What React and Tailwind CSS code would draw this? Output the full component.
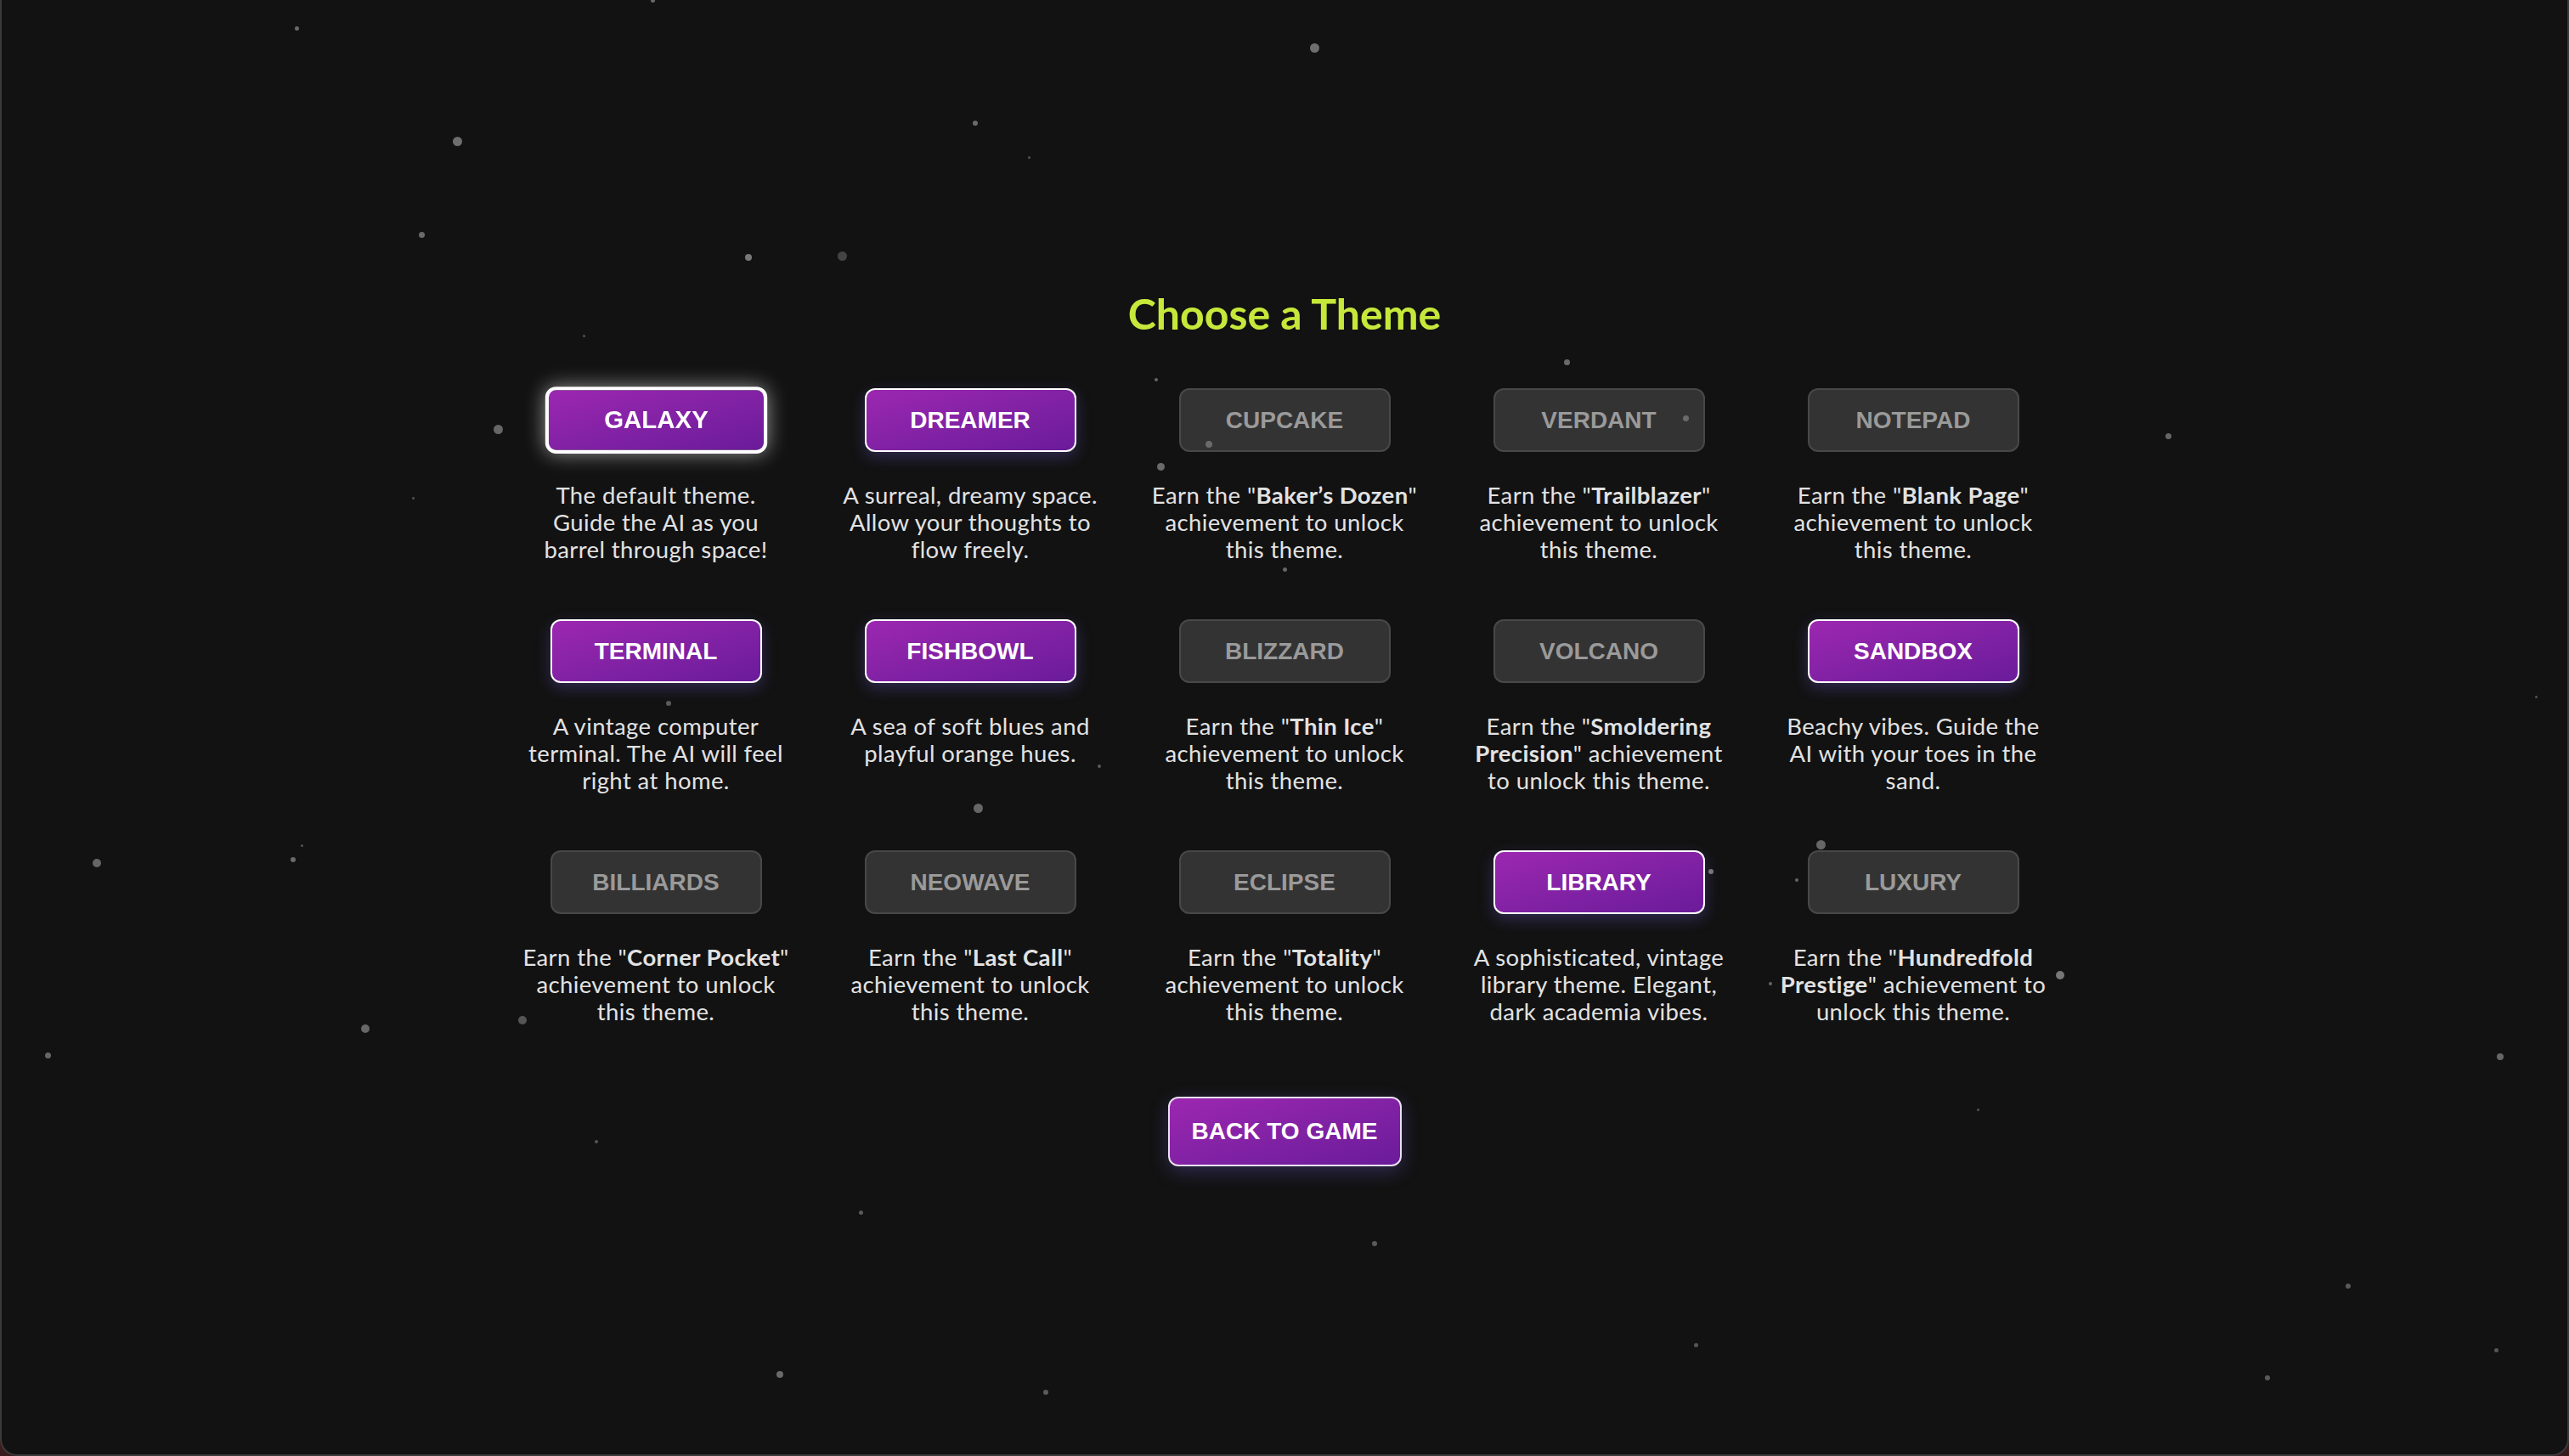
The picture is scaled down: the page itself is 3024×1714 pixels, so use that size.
const themes = [
  { name: 'GALAXY', unlocked: true, selected: true, lines: ['The default theme.', 'Guide the AI as you', 'barrel through space!'] },
  { name: 'DREAMER', unlocked: true, lines: ['A surreal, dreamy space.', 'Allow your thoughts to', 'flow freely.'] },
  { name: 'CUPCAKE', achievement: 'Baker’s Dozen' },
  { name: 'VERDANT', achievement: 'Trailblazer' },
  { name: 'NOTEPAD', achievement: 'Blank Page' },
  { name: 'TERMINAL', unlocked: true, lines: ['A vintage computer', 'terminal. The AI will feel', 'right at home.'] },
  { name: 'FISHBOWL', unlocked: true, lines: ['A sea of soft blues and', 'playful orange hues.'] },
  { name: 'BLIZZARD', achievement: 'Thin Ice' },
  { name: 'VOLCANO', custom: 'volcano' },
  { name: 'SANDBOX', unlocked: true, lines: ['Beachy vibes. Guide the', 'AI with your toes in the', 'sand.'] },
  { name: 'BILLIARDS', achievement: 'Corner Pocket' },
  { name: 'NEOWAVE', achievement: 'Last Call' },
  { name: 'ECLIPSE', achievement: 'Totality' },
  { name: 'LIBRARY', unlocked: true, lines: ['A sophisticated, vintage', 'library theme. Elegant,', 'dark academia vibes.'] },
  { name: 'LUXURY', custom: 'luxury' },
];

// [x, y, size, color]
const stars = [
  [347, 33, 5, '#6a6a6a'], [766, 0, 5, '#6a6a6a'], [1545, 56, 11, '#6e6e6e'], [536, 166, 11, '#6e6e6e'],
  [1146, 145, 6, '#6a6a6a'], [1209, 185, 3, '#555'], [494, 276, 7, '#6a6a6a'], [879, 303, 8, '#777'],
  [989, 301, 11, '#444'], [685, 395, 3, '#555'], [1842, 426, 7, '#6a6a6a'], [1359, 447, 4, '#666'],
  [584, 505, 11, '#666'], [484, 586, 3, '#555'], [1421, 523, 8, '#6a6a6a'], [1364, 549, 9, '#6a6a6a'],
  [2550, 513, 7, '#666'], [1982, 492, 7, '#6a6a6a'], [1510, 670, 5, '#666'], [785, 828, 6, '#5a5a5a'],
  [1292, 902, 4, '#5a5a5a'], [1149, 951, 11, '#666'], [2983, 820, 3, '#555'], [353, 995, 3, '#555'],
  [343, 1012, 6, '#6a6a6a'], [112, 1016, 10, '#666'], [2141, 994, 11, '#666'], [2113, 1036, 4, '#666'],
  [2012, 1026, 6, '#777'], [2423, 1148, 10, '#777'], [2082, 1158, 4, '#666'], [613, 1201, 10, '#555'],
  [428, 1211, 10, '#666'], [54, 1242, 7, '#666'], [2941, 1244, 8, '#666'], [700, 1344, 4, '#555'],
  [2326, 1306, 3, '#555'], [1011, 1427, 5, '#5a5a5a'], [1616, 1464, 6, '#5a5a5a'], [2762, 1514, 6, '#5a5a5a'],
  [1994, 1583, 5, '#555'], [2936, 1589, 5, '#555'], [916, 1618, 8, '#6a6a6a'], [1229, 1639, 6, '#5a5a5a'],
  [2667, 1622, 6, '#5a5a5a'],
];

function Desc({ theme }) {
  if (theme.lines) {
    return theme.lines.map((l) => <span key={l} className="block">{l}</span>);
  }
  if (theme.custom === 'volcano') {
    return (
      <>
        <span className="block">Earn the "<b>Smoldering</b></span>
        <span className="block"><b>Precision</b>" achievement</span>
        <span className="block">to unlock this theme.</span>
      </>
    );
  }
  if (theme.custom === 'luxury') {
    return (
      <>
        <span className="block">Earn the "<b>Hundredfold</b></span>
        <span className="block"><b>Prestige</b>" achievement to</span>
        <span className="block">unlock this theme.</span>
      </>
    );
  }
  return (
    <>
      <span className="block">Earn the "<b>{theme.achievement}</b>"</span>
      <span className="block">achievement to unlock</span>
      <span className="block">this theme.</span>
    </>
  );
}

function ThemeCard({ theme }) {
  let btn;
  if (theme.selected) {
    btn = 'scale-[1.05] border-[4px] border-white bg-linear-to-br from-[#9c27b0] to-[#6a1b9a] text-white shadow-[0_0_22px_rgba(255,255,255,0.55)]';
  } else if (theme.unlocked) {
    btn = 'border-2 border-white bg-linear-to-br from-[#9c27b0] to-[#6a1b9a] text-white shadow-[0_6px_18px_rgba(120,100,230,0.3)]';
  } else {
    btn = 'border-2 border-[#484848] bg-[#333333] text-[#9a9a9a]';
  }

  return (
    <div className="flex flex-col items-center">
      <button className={`flex h-[75px] w-[249px] items-center justify-center rounded-[12px] text-[28px] font-bold font-['Liberation_Sans',Arial,sans-serif] ${btn}`}>
        {theme.name}
      </button>
      <p className="mt-[35px] w-[320px] whitespace-nowrap text-center text-[27.5px] leading-[32px] tracking-[0.4px] text-[#e2e2e2]">
        <Desc theme={theme} />
      </p>
    </div>
  );
}

export default function App() {
  return (
    <div className="bg-[#3a1c1c]">
      <div className="relative flex min-h-screen items-center justify-center overflow-hidden rounded-b-[20px] border-x-2 border-b-2 border-[#3a3a3a] bg-[#121212] font-['Lato',sans-serif]">
        <div className="flex flex-col items-center">
          <h1 className="text-[50px] font-bold leading-[60px] text-[#c6e83a]">Choose a Theme</h1>
          <div className="mt-[58px] grid grid-cols-5 gap-x-[50px] gap-y-[66px]">
            {themes.map((t) => (
              <ThemeCard key={t.name} theme={t} />
            ))}
          </div>
          <button className="mt-[84px] flex h-[82px] w-[275px] items-center justify-center rounded-[12px] border-2 border-[#e8e0f0] bg-linear-to-br from-[#9c27b0] to-[#6a1b9a] text-[28px] font-bold text-white shadow-[0_6px_22px_rgba(120,100,230,0.3)] font-['Liberation_Sans',Arial,sans-serif]">
            BACK TO GAME
          </button>
        </div>
        <div className="pointer-events-none absolute inset-0">
          {stars.map(([x, y, s, c], i) => (
            <span
              key={i}
              className="absolute rounded-full blur-[0.5px]"
              style={{ left: x - s / 2, top: y - s / 2, width: s, height: s, background: c }}
            />
          ))}
        </div>
      </div>
    </div>
  );
}
